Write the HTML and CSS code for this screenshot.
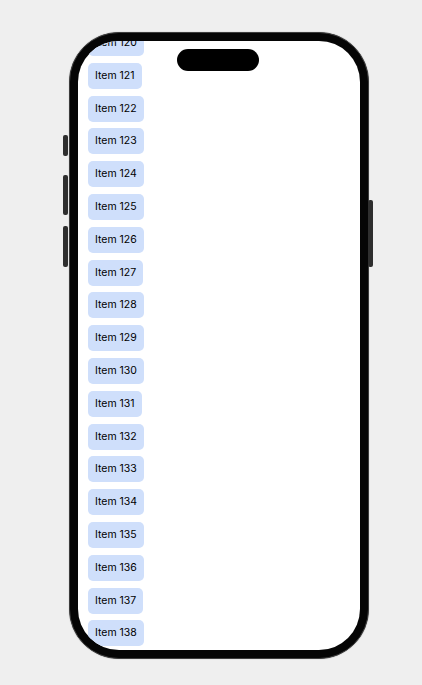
FILE: index.html
```html
<!DOCTYPE html>
<html lang="en">
<head>
    <meta charset="UTF-8">
    <meta name="viewport" content="width=device-width, initial-scale=1.0">
    <title>Item list</title>
    <link rel="stylesheet" href="styles.css">
</head>
<body>
    <div class="phone">
        <span class="btn btn-action"></span>
        <span class="btn btn-vol-up"></span>
        <span class="btn btn-vol-down"></span>
        <span class="btn btn-power"></span>
        <div class="screen">
            <div class="island"></div>
            <ul class="list">
                <li class="item">Item 120</li>
                <li class="item">Item 121</li>
                <li class="item">Item 122</li>
                <li class="item">Item 123</li>
                <li class="item">Item 124</li>
                <li class="item">Item 125</li>
                <li class="item">Item 126</li>
                <li class="item">Item 127</li>
                <li class="item">Item 128</li>
                <li class="item">Item 129</li>
                <li class="item">Item 130</li>
                <li class="item">Item 131</li>
                <li class="item">Item 132</li>
                <li class="item">Item 133</li>
                <li class="item">Item 134</li>
                <li class="item">Item 135</li>
                <li class="item">Item 136</li>
                <li class="item">Item 137</li>
                <li class="item">Item 138</li>
            </ul>
        </div>
    </div>
</body>
</html>
```
FILE: styles.css
```css
body {
    margin: 0;
    padding: 32px 0 0 69px;
    background: #efefef;
    font-family: 'Inter', 'Liberation Sans', sans-serif;
    height: 685px;
    box-sizing: border-box;
    overflow: hidden;
}
.phone {
    position: relative;
    width: 300px;
    height: 627px;
    box-sizing: border-box;
    padding: 8px;
    border: 1px solid #3c3c3c;
    border-radius: 50px;
    background: #050505;
    box-shadow: 0 0 1px rgba(0, 0, 0, 0.4);
}
.btn {
    position: absolute;
    width: 5px;
    background: #2e2e2e;
    border-radius: 2px;
}
.btn-action { left: -7px; top: 102px; height: 21px; }
.btn-vol-up { left: -7px; top: 142px; height: 40px; }
.btn-vol-down { left: -7px; top: 193px; height: 41px; }
.btn-power { right: -5px; top: 167px; height: 67px; }
.screen {
    position: relative;
    height: 100%;
    background: #fff;
    border-radius: 41px;
    overflow: hidden;
}
.island {
    position: absolute;
    top: 8px;
    left: 50%;
    margin-left: -42px;
    width: 82px;
    height: 22px;
    background: #000;
    border-radius: 11px;
    z-index: 2;
}
.list {
    list-style: none;
    margin: -11px 0 0 0;
    padding: 0 0 0 10px;
    display: flex;
    flex-direction: column;
    align-items: flex-start;
    gap: 6.8px;
}
.item {
    background: #cfdffb;
    color: #000;
    font-size: 10.5px;
    line-height: 14px;
    padding: 6px 7px;
    border-radius: 5px;
}
```
